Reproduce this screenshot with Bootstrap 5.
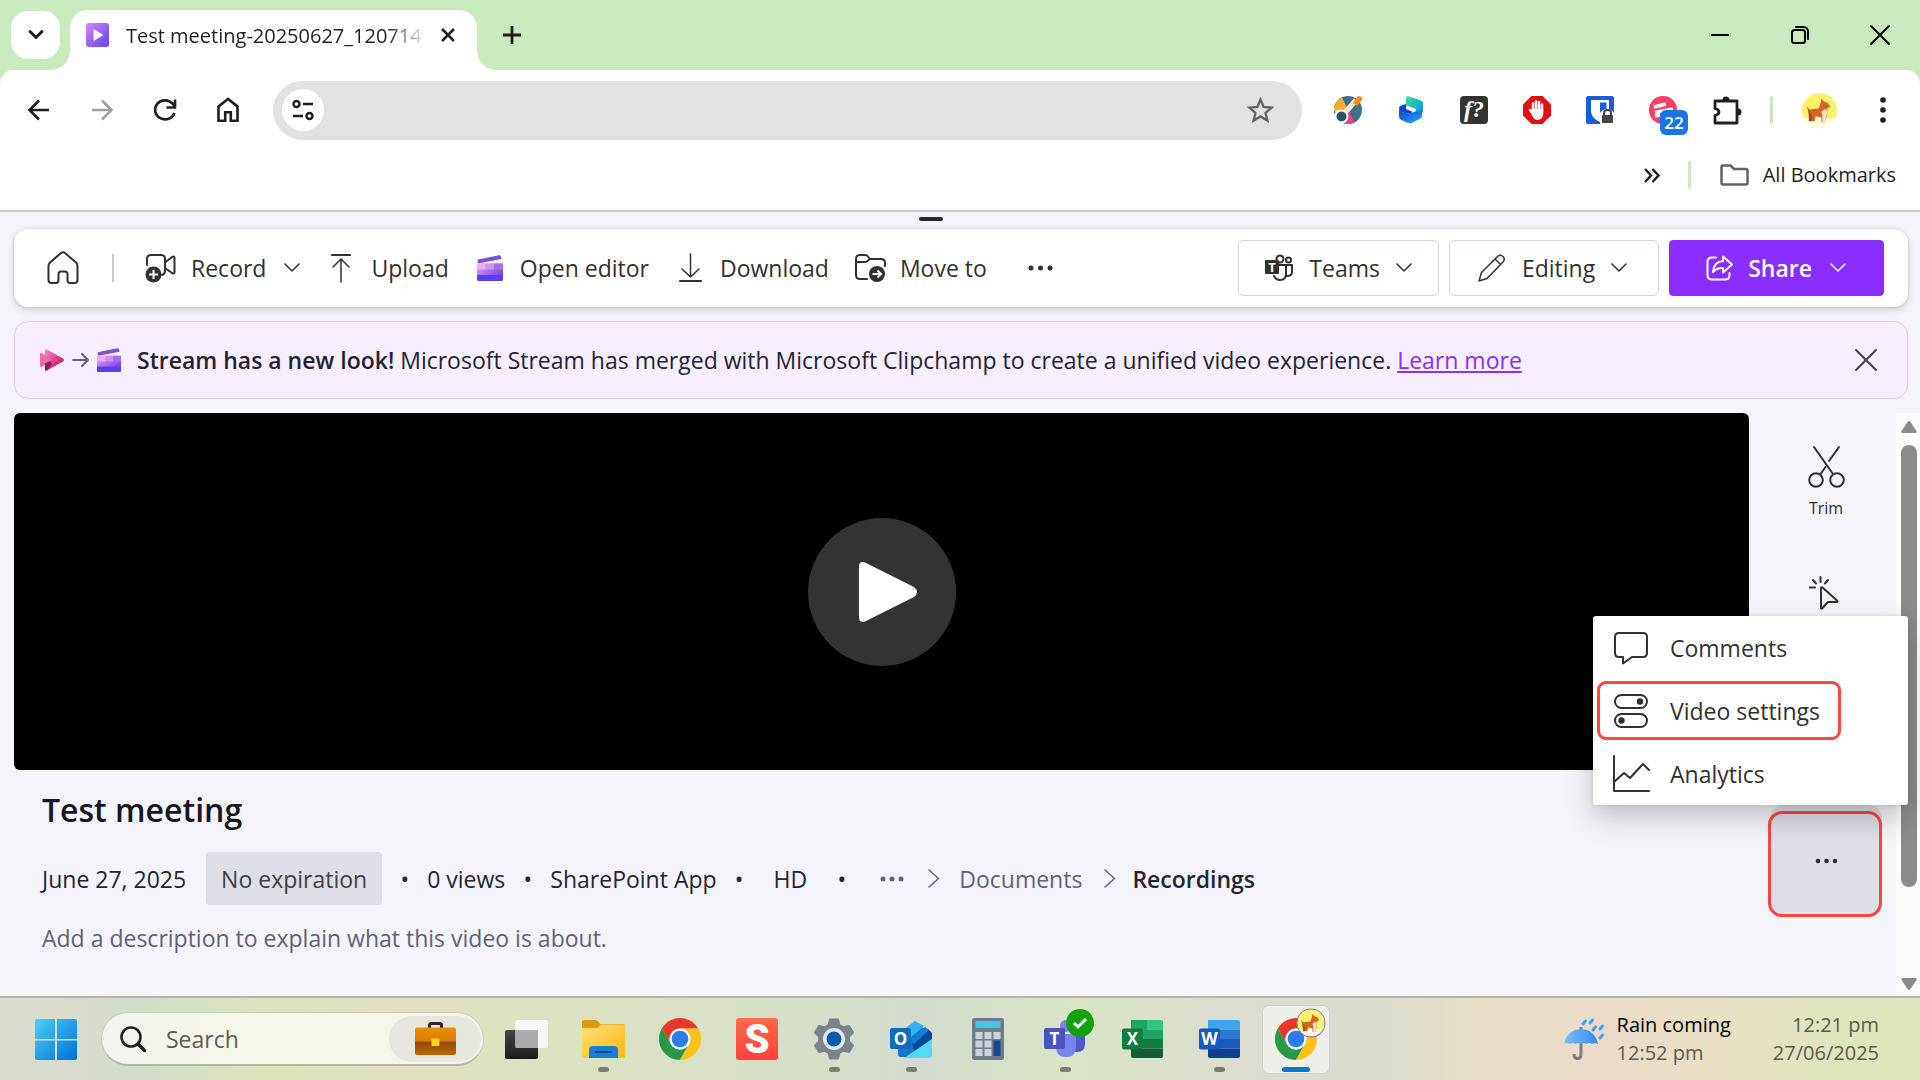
<!DOCTYPE html>
<html lang="en">
<head>
  <meta charset="UTF-8" />
  <meta name="viewport" content="width=device-width, initial-scale=1" />
  <title>Test meeting-20250627_120714</title>
  <link href="https://cdn.jsdelivr.net/npm/bootstrap@5.3.0/dist/css/bootstrap.min.css" rel="stylesheet" />
  <style>
    body { font-family: "Open Sans", "Noto Sans", sans-serif; font-size: 23px; line-height: 32px; color: #323130; background: #f5f4fa; overflow: hidden; }
    svg { display: block; flex-shrink: 0; overflow: visible; }
    button { border: 0; background: none; padding: 0; color: inherit; white-space: nowrap; }
    .ln { fill: none; stroke: currentColor; stroke-width: 2; stroke-linecap: round; stroke-linejoin: round; }
    .thin { stroke-width: 1.5; }
    .thick { stroke-width: 3; }

    /* Tab strip */
    .tab-strip { height: 70px; background: #cbe9bf; color: #1f1f1f; padding: 10px 31px 0 11px; }
    .tab-search { width: 49px; height: 48px; border-radius: 17px; background: #fff; margin: 0 10px 10px 0; }
    .active-tab { width: 407px; height: 60px; background: #fff; border-radius: 18px 18px 0 0; padding: 0 21px 10px 16px; font-size: 20px; position: relative; }
    .active-tab::before, .active-tab::after { content: ""; position: absolute; bottom: 0; width: 18px; height: 18px; }
    .active-tab::before { left: -18px; background: radial-gradient(circle at 0 0, transparent 17px, #fff 18px); }
    .active-tab::after { right: -18px; background: radial-gradient(circle at 100% 0, transparent 17px, #fff 18px); }
    .tab-title { margin: 2px 0 0 17px; white-space: nowrap; -webkit-mask-image: linear-gradient(90deg, #000 88%, rgba(0,0,0,.15)); }
    .new-tab { margin: 0 0 10px 26px; }
    .win-buttons { gap: 62px; color: #000; margin-bottom: 10px; }

    /* Address bar and bookmarks */
    .toolbar-wrap { background: #cbe9bf; }
    .toolbar-box { background: #fff; height: 142px; border-radius: 14px 14px 0 0; border-bottom: 2px solid #ccc; color: #1f1f23; }
    .address-row { height: 80px; padding: 0 34px 0 27px; }
    .nav-icons { gap: 39px; margin-right: 33px; }
    .omnibox { height: 59px; border-radius: 30px; background: #e1e1e1; padding: 0 28px 0 9px; }
    .omnibox input { background: none; border: 0; outline: 0; height: 40px; font-size: 20px; }
    .site-info { width: 42px; height: 42px; border-radius: 50%; background: #fff; }
    .extensions { gap: 35px; margin-left: 32px; }
    .green-rule { width: 3px; height: 28px; border-radius: 2px; background: #cbe9bf; margin: 0 29px 0 28px; }
    .count-tag { position: absolute; left: 11px; top: 14px; width: 28px; height: 25px; border-radius: 6px; background: #1a73e8; color: #fff; font: 600 17px/25px "Open Sans", sans-serif; text-align: center; }
    .browser-menu { padding-left: 43px; }
    .bookmark-row { height: 50px; padding-right: 24px; font-size: 20px; }
    .bookmark-row button { gap: 14px; }

    /* Command bar */
    .handle-row { height: 17px; padding: 5px 58px 0 0; }
    .handle { width: 24px; height: 4px; border-radius: 2px; background: #242433; }
    .command-bar { height: 78px; margin: 0 12px 14px 14px; padding: 0 24px 0 33px; background: #fff; border-radius: 14px; box-shadow: 0 3px 7px rgba(0,0,0,.16), 0 0 3px rgba(0,0,0,.14); }
    .commands { gap: 25px; }
    .cmd { display: flex; align-items: center; gap: 14px; }
    .cmd-rule { width: 2px; height: 28px; background: #c8c8c8; margin: 0 6px 0 8px; }
    .box-btn { height: 56px; display: flex; align-items: center; gap: 16px; border: 1px solid #d1d1e0; border-radius: 6px; padding: 0 26px; }
    .edit-btn { padding: 0 31px 0 28px; }
    .share-btn { background: #8a2dff; border-color: #8a2dff; border-radius: 4px; color: #fff; font-weight: 600; padding: 0 37px 0 36px; gap: 14px; }
    .mode-buttons { gap: 10px; }

    /* Banner */
    .banner { height: 78px; margin: 0 12px 14px 14px; padding: 0 30px 0 25px; background: #f7efff; border: 1px solid #e3c8fb; border-radius: 14px; color: #242433; }
    .banner a { color: #8a2dff; }

    /* Player */
    .player { background: #000; border-radius: 6px; }
    .play-btn { width: 148px; height: 148px; border-radius: 50%; background: #333; color: #fff; }
    .video-col { padding-left: 14px; min-width: 0; }
    .details { padding: 18px 0 42px 28px; color: #242433; }
    .details h1 { font-size: 32px; font-weight: 600; line-height: 44px; margin: 0 0 20px; color: #16161f; }
    .meta-row { height: 53px; margin-bottom: 17px; white-space: nowrap; }
    .expiry { height: 53px; background: #dedee7; border-radius: 4px; padding: 0 15px; margin-left: 20px; color: #424242; }
    .dot { width: 45px; text-align: center; }
    .muted-ink, .details a { color: #616179; text-decoration: none; }
    .details a { margin: 0 14px 0 11px; }

    /* Side tools */
    .tools { padding: 14px 14px 79px 21px; gap: 14px; color: #323130; }
    .tool-btn { width: 112px; height: 112px; border-radius: 14px; display: flex; flex-direction: column; align-items: center; font-size: 16px; line-height: 22px; }
    .tool-btn.more { background: #dedee7; justify-content: center; position: relative; }
    .tool-btn.more::after { content: ""; position: absolute; inset: 6px 0 0 -2px; border: 3px solid #ff4444; border-radius: 14px; }
    .overflow-menu { position: absolute; right: -26px; bottom: 112px; width: 315px; display: flex; flex-direction: column; align-items: flex-start; background: #fff; border-radius: 3px; box-shadow: 0 12px 28px rgba(0,0,0,.22), 0 0 4px rgba(0,0,0,.12); z-index: 5; }
    .overflow-menu button { display: flex; align-items: center; gap: 22px; height: 59px; margin: 2px 4px; padding: 0 18px 0 14px; border: 3px solid transparent; border-radius: 9px; }
    .overflow-menu .picked { border-color: #ff4444; }
    .scroll-track { width: 24px; background: #fcfcfc; padding: 8px 4px 6px 5px; color: #8b8b8b; }
    .scroll-thumb { width: 16px; height: 442px; border-radius: 8px; background: #8b8b8b; margin-top: 12px; }

    /* Taskbar */
    .taskbar { height: 84px; border-top: 2px solid #b3b7a4; padding: 0 41px 0 35px; font-size: 20px; line-height: 28px; color: #5c5c54;
      background: linear-gradient(90deg, #dddbd0 0, #d3dccc 7%, #dce4ba 14%, #e0e0c0 21%, #dce2c3 30%, #d8dfc8 40%, #d3dccf 48%, #dae4c6 56%, #dcdbd2 66%, #d9dccf 71%, #e7dec8 77%, #ebdbca 84%, #e6e1c3 91%, #dee6bb 96%, #dde5ba 100%); }
    .search-pill { width: 383px; height: 54px; border-radius: 27px; margin: 0 9px 0 24px; padding: 0 2px 0 18px; background: linear-gradient(90deg, #f2f4ee, #f7f9ea 50%, #f3f4ea); border: 1px solid #c9cdb8; border-bottom: 2px solid #b3b7a4; }
    .search-pill input { border: 0; background: none; outline: 0; width: 200px; margin-left: 18px; font-size: 23px; color: #5c5c54; min-width: 0; }
    .search-pill input::placeholder { color: #5c5c54; opacity: 1; }
    .case-pill { width: 92px; height: 46px; border-radius: 23px; background: #e5e6dd; }
    .apps { gap: 11px; }
    .app { width: 66px; height: 67px; border-radius: 6px; position: relative; display: flex; align-items: center; justify-content: center; }
    .app.running::after { content: ""; position: absolute; bottom: 1px; left: 28px; width: 11px; height: 5px; border-radius: 3px; background: #7d7f74; }
    .app.current { background: #eeefe9; box-shadow: 0 0 0 1px #cfd0c8; }
    .app.current::after { left: 19px; width: 28px; background: #0078d4; }
    .weather { gap: 13px; margin-right: 42px; }
  </style>
</head>
<body class="vh-100 d-flex flex-column">

  <!-- Shared icons -->
  <svg width="0" height="0" class="position-absolute" aria-hidden="true">
    <defs>
      <linearGradient id="gClap" x1="0" y1="0" x2="1" y2="1"><stop offset="0" stop-color="#e6a6f5"/><stop offset=".5" stop-color="#a568e8"/><stop offset="1" stop-color="#4b2fe8"/></linearGradient>
      <linearGradient id="gFav" x1="0" y1="0" x2="1" y2="1"><stop offset="0" stop-color="#d985f5"/><stop offset="1" stop-color="#5b43f5"/></linearGradient>
      <linearGradient id="gPink" x1="0" y1="0" x2="1" y2="1"><stop offset="0" stop-color="#ff8fc2"/><stop offset=".6" stop-color="#d63384"/><stop offset="1" stop-color="#8f1a5c"/></linearGradient>
      <linearGradient id="gWin" x1="0" y1="0" x2="1" y2="1"><stop offset="0" stop-color="#4cd0ff"/><stop offset="1" stop-color="#006fd0"/></linearGradient>
      <linearGradient id="gFold" x1="0" y1="0" x2="1" y2="1"><stop offset="0" stop-color="#ffdf7a"/><stop offset="1" stop-color="#fdb813"/></linearGradient>
      <linearGradient id="gCase" x1="0" y1="0" x2="0" y2="1"><stop offset="0" stop-color="#ee9005"/><stop offset=".5" stop-color="#d97a00"/><stop offset=".52" stop-color="#8f4a02"/><stop offset="1" stop-color="#bd6a05"/></linearGradient>
      <linearGradient id="gRed" x1="0" y1="0" x2="0" y2="1"><stop offset="0" stop-color="#ff6b47"/><stop offset="1" stop-color="#ff4040"/></linearGradient>
      <linearGradient id="gDark" x1="0" y1="0" x2="0" y2="1"><stop offset="0" stop-color="#444"/><stop offset="1" stop-color="#1c1c1c"/></linearGradient>
      <linearGradient id="gUmb" x1="0" y1="0" x2="1" y2="0"><stop offset="0" stop-color="#7cc0fb"/><stop offset="1" stop-color="#2f8cf0"/></linearGradient>
      <linearGradient id="gTeal" x1="0" y1="0" x2="1" y2="1"><stop offset="0" stop-color="#3ddc97"/><stop offset=".6" stop-color="#12b5c9"/><stop offset="1" stop-color="#0a8fd8"/></linearGradient>
      <linearGradient id="gBlue" x1="0" y1="0" x2="1" y2="1"><stop offset="0" stop-color="#1443c9"/><stop offset=".5" stop-color="#1b72ea"/><stop offset="1" stop-color="#22b2f5"/></linearGradient>
    </defs>
    <symbol id="chev" viewBox="0 0 16 10"><path class="ln thin" d="M1 1l7 7 7-7"/></symbol>
    <symbol id="next" viewBox="0 0 12 19"><path class="ln thin" d="M1 1l9.500 8.500L1 18"/></symbol>
    <symbol id="clap" viewBox="0 0 26 26">
      <path d="M1 4.500L22 .2a1.500 1.500 0 0 1 1.800 1.200L24.500 4 1.200 8.500Q0 6 1 4.500z" fill="#7f4fd4"/>
      <path d="M0 8.500h26V24a2 2 0 0 1-2 2H2a2 2 0 0 1-2-2z" fill="url(#gClap)"/>
      <path d="M0 8.500h8.600v6H0z" fill="#e9adf6"/><path d="M8.600 8.500h8.700v6H8.600z" fill="#cf94f2"/><path d="M17.300 8.500H26v6h-8.700z" fill="#a76df0"/>
      <path d="M0 20h26v4a2 2 0 0 1-2 2H2a2 2 0 0 1-2-2z" fill="#5740ee"/>
    </symbol>
    <symbol id="chrome" viewBox="0 0 48 48">
      <path d="M24 12h20.780A24 24 0 0 0 3.220 12l10.390 18A12 12 0 0 1 24 12z" fill="#e8382c"/>
      <path d="M3.220 12A24 24 0 0 0 24 48l10.390-18a12 12 0 0 1-20.780 0z" fill="#279847"/>
      <path d="M44.780 12A24 24 0 0 1 24 48l10.390-18A12 12 0 0 0 24 12z" fill="#fcc21a"/>
      <circle cx="24" cy="24" r="12" fill="#fff"/><circle cx="24" cy="24" r="9.500" fill="#2c7bea"/>
    </symbol>
    <symbol id="corgi" viewBox="0 0 36 36">
      <circle cx="18" cy="18" r="18" fill="#fffbe0"/>
      <path d="M0 18a18 18 0 0 1 36 0q0 5-2 8H2q-2-4-2-8z" fill="#fcf26a"/>
      <path d="M5 14l3 3 9-1 2-5 1-5 3 3 3 1 3 4-3 2v7l-2 3v4h-4v-5l-6-1-1 5H8l-1-6-1-5z" fill="#d2662c"/>
      <path d="M20 19l5-3 1 5-2 5v4h-3v-6z" fill="#f6e3cc"/><path d="M7 18l4 7-2 4H7z" fill="#a94c1a"/>
    </symbol>
  </svg>

  <!-- Tab strip -->
  <header class="tab-strip d-flex align-items-center">
    <button class="tab-search d-flex align-items-center justify-content-center" aria-label="Search tabs">
      <svg width="16" height="10" viewBox="0 0 16 10"><path class="ln thick" d="M2 1.500l6 6 6-6"/></svg>
    </button>
    <div class="active-tab d-flex align-items-center">
      <svg width="23" height="24" viewBox="0 0 23 24"><rect width="23" height="24" rx="3" fill="url(#gFav)"/><path d="M7.500 7v10q0 1 1 .5l8-5q.6-.5 0-1l-8-5q-1-.4-1 .5z" fill="#fff"/></svg>
      <span class="tab-title">Test meeting-20250627_120714</span>
      <button class="ms-auto" aria-label="Close tab"><svg width="16" height="16" viewBox="0 0 16 16"><path d="M2 2l12 12M14 2L2 14" stroke="#1f1f1f" stroke-width="2.600"/></svg></button>
    </div>
    <button class="new-tab" aria-label="New tab"><svg width="18" height="18" viewBox="0 0 18 18"><path d="M9 0v18M0 9h18" stroke="#1f1f1f" stroke-width="2.800"/></svg></button>
    <div class="win-buttons d-flex align-items-center ms-auto">
      <button aria-label="Minimize"><svg width="18" height="18" viewBox="0 0 18 18"><path d="M0 9h18" stroke="#000" stroke-width="2"/></svg></button>
      <button aria-label="Restore"><svg width="18" height="18" viewBox="0 0 18 18"><rect class="ln" x="1" y="4" width="13" height="13" rx="2.500"/><path class="ln" d="M5 1h7.500A4.500 4.500 0 0 1 17 5.500V13"/></svg></button>
      <button aria-label="Close"><svg width="18" height="18" viewBox="0 0 18 18"><path class="ln" d="M0 0l18 18M18 0L0 18"/></svg></button>
    </div>
  </header>

  <!-- Address bar -->
  <div class="toolbar-wrap">
    <div class="toolbar-box">
      <div class="address-row d-flex align-items-center">
        <nav class="nav-icons d-flex align-items-center">
          <button aria-label="Back"><svg width="24" height="24" viewBox="0 0 24 24"><path d="M22 12H3M12 2.500L2.500 12l9.500 9.500" fill="none" stroke="#1f1f23" stroke-width="2.600"/></svg></button>
          <button aria-label="Forward"><svg width="24" height="24" viewBox="0 0 24 24"><path d="M2 12h19M12 2.500l9.500 9.500-9.500 9.500" fill="none" stroke="#a0a0a0" stroke-width="2.600"/></svg></button>
          <button aria-label="Reload"><svg width="24" height="24" viewBox="0 0 24 24"><path d="M21.500 15A10 9.500 0 1 1 19.500 5.500L22 8.500M22 1.500v8h-8.500" fill="none" stroke="#1f1f23" stroke-width="2.600"/></svg></button>
          <button aria-label="Home"><svg width="24" height="26" viewBox="0 0 24 26"><path d="M2.500 9.500L12 2l9.500 7.500v14.200h-6.700v-8.500H9.200v8.500H2.500z" fill="none" stroke="#1f1f23" stroke-width="2.600"/></svg></button>
        </nav>
        <div class="omnibox d-flex align-items-center flex-grow-1">
          <button class="site-info d-flex align-items-center justify-content-center" aria-label="Site information"><svg width="22" height="20" viewBox="0 0 22 20"><g fill="none" stroke="#1f1f23" stroke-width="2.400"><circle cx="4.500" cy="4" r="3"/><path d="M11 4h10M1 16h10"/><circle cx="17.500" cy="16" r="3"/></g></svg></button>
          <input class="flex-grow-1" type="text" aria-label="Address" />
          <button aria-label="Bookmark this tab"><svg width="27" height="26" viewBox="0 0 27 26"><path d="M13.500 2.500l3.100 7.400 8 .7-6.100 5.200 1.900 7.800-6.900-4.200-6.900 4.200 1.900-7.800-6.100-5.200 8-.7z" fill="none" stroke="#5f6368" stroke-width="2.300"/></svg></button>
        </div>
        <div class="extensions d-flex align-items-center">
          <button aria-label="Color picker"><svg width="28" height="28" viewBox="0 0 28 28"><circle cx="14" cy="14" r="14" fill="#41708a"/><path d="M14 14L0 13A14 14 0 0 1 8 1.500z" fill="#f9ab2e"/><path d="M14 14L0 13Q1 18 5 20z" fill="#fdd63f"/><path d="M14 14l7 12q-6 3.500-12 1z" fill="#f2398a"/><path d="M10 18L22 4" stroke="#fff" stroke-width="5"/><path d="M10 18L22 5" stroke="#ffe2b8" stroke-width="3"/><path d="M19 7l5-7q5 0 4 4l-5 6z" fill="#fb8a1c"/><circle cx="7.500" cy="20.500" r="6" fill="#2d5468" stroke="#fff" stroke-width="2"/></svg></button>
          <button aria-label="Designer"><svg width="28" height="28" viewBox="0 0 28 28"><path d="M9 2.500Q9-.5 12 .5l11 3.500q3 1 3 4v6q0 3-3 4l-4 1V13L9 9.500z" fill="url(#gTeal)"/><path d="M2 12q0-2 2-2.500L9 8v1.500L19 13v2q-1 3-5 4.500L4 16q-2-1-2-4z" fill="#fff"/><path d="M2 12q0-2 2-2.500L9 8v5l7 3q-3 2-8 1.500L3 15z" fill="#1443c9"/><path d="M2 13q1 2.500 4 3.500 7 2 12-1 4 0 7-2.500V20q0 2-2.500 3L16 26.500q-3 1.500-6 0L4.500 24Q2 23 2 20z" fill="url(#gBlue)"/></svg></button>
          <button aria-label="Font finder"><svg width="28" height="28" viewBox="0 0 28 28"><rect width="28" height="28" rx="4" fill="#333"/><text x="14" y="21" text-anchor="middle" font-family="Liberation Serif, serif" font-style="italic" font-weight="700" font-size="24" fill="#fff">f?</text></svg></button>
          <button aria-label="Ad blocker"><svg width="28" height="28" viewBox="0 0 28 28"><path d="M8.500 0h11L28 8.500v11L19.500 28h-11L0 19.500v-11z" fill="#e60f0f"/><g stroke="#fff" stroke-width="2.500" stroke-linecap="round" fill="none"><path d="M10 15V7.500M13 14V5.500M16 14V6M19 15V8.500M10 18l-3-4"/></g><path d="M8.800 13h11.500v4q0 7-6 7-3.500 0-5.500-5z" fill="#fff"/></svg></button>
          <button aria-label="Password manager"><svg width="28" height="28" viewBox="0 0 28 28"><rect width="28" height="28" rx="2" fill="#175ddc"/><path d="M5 4h18v11q0 7-9 11-9-4-9-11z" fill="#fff"/><path d="M14 6.500h6.500V15q0 4-6.500 8z" fill="#175ddc"/><path d="M14 28V17q3-4 7-4t7 4v11z" fill="#fff"/><rect x="16" y="19" width="11" height="8" rx="1" fill="#444"/><path d="M18 19v-2q0-3 3.500-3t3.500 3v2" fill="none" stroke="#444" stroke-width="2"/></svg></button>
          <button class="position-relative" aria-label="Notes, 22 items"><svg width="28" height="28" viewBox="0 0 28 28"><circle cx="14" cy="14" r="14" fill="#ff3d60"/><path d="M5 11l12-3M6 16.500L24 13M6 20l5-1" stroke="#fff" stroke-width="3.600"/></svg><span class="count-tag">22</span></button>
          <button aria-label="Extensions"><svg width="30" height="30" viewBox="0 0 30 30"><path d="M3 6h22v22H3v-7.500q4-1 4-3.500t-4-3.500z" fill="none" stroke="#1f1f23" stroke-width="2.800" stroke-linejoin="round"/><path d="M10.500 5a3.500 3.500 0 0 1 7 0zM26 13.500a3.500 3.500 0 0 1 0 7z" fill="#1f1f23"/></svg></button>
        </div>
        <span class="green-rule"></span>
        <button aria-label="Profile"><svg width="35" height="35"><use href="#corgi"/></svg></button>
        <button class="browser-menu" aria-label="Menu"><svg width="6" height="26" viewBox="0 0 6 26"><g fill="#1f1f23"><circle cx="3" cy="3" r="2.800"/><circle cx="3" cy="13" r="2.800"/><circle cx="3" cy="23" r="2.800"/></g></svg></button>
      </div>
      <div class="bookmark-row d-flex align-items-center justify-content-end">
        <button aria-label="More bookmarks"><svg width="16" height="15" viewBox="0 0 16 15"><path d="M1 1l6 6.500L1 14M8.500 1l6 6.500-6 6.500" fill="none" stroke="#1f1f23" stroke-width="2.400"/></svg></button>
        <span class="green-rule"></span>
        <button class="d-flex align-items-center"><svg width="29" height="22" viewBox="0 0 29 22"><path d="M1.500 19V3q0-1.500 1.500-1.500h7.500L14 5h12q1.500 0 1.500 1.500V19q0 1.500-1.500 1.500H3Q1.500 20.500 1.500 19z" fill="none" stroke="#5f6368" stroke-width="2.500"/></svg>All Bookmarks</button>
      </div>
    </div>
  </div>

  <main class="d-flex flex-column flex-grow-1">
    <div class="handle-row d-flex justify-content-center"><span class="handle"></span></div>

    <!-- Command bar -->
    <div class="command-bar d-flex align-items-center">
      <div class="commands d-flex align-items-center">
        <button aria-label="Home"><svg width="32" height="34" viewBox="0 0 32 34"><path class="ln" d="M1.500 15q0-2 1.500-3.500L14 2q2-1.500 4 0l11 9.500q1.500 1.500 1.500 3.500v14q0 3-3 3H23q-2.500 0-2.500-3v-6q0-2.500-2.500-2.500h-4q-2.500 0-2.500 2.500v6q0 3-2.500 3H4.500q-3 0-3-3z"/></svg></button>
        <span class="cmd-rule"></span>
        <button class="cmd">
          <svg width="32" height="30" viewBox="0 0 32 30"><path class="ln" d="M2 12V6q0-4 4-4h10q4 0 4 4v12q0 3-3 4M20 9.500l7-5.500q2.500-1.200 2.500 1v14q0 2.200-2.500 1l-7-5"/><circle cx="8.500" cy="21.500" r="8" fill="#323130"/><path d="M8.500 17v9M4 21.500h9" stroke="#fff" stroke-width="2"/></svg>
          Record <svg class="ms-1" width="16" height="10"><use href="#chev"/></svg>
        </button>
        <button class="cmd"><svg width="32" height="30" viewBox="0 0 32 30"><path class="ln" d="M7 2h18"/><path class="ln thin" d="M16 29V6M8 14l8-8 8 8"/></svg>Upload</button>
        <button class="cmd"><svg width="32" height="26"><use href="#clap"/></svg>Open editor</button>
        <button class="cmd"><svg width="32" height="30" viewBox="0 0 32 30"><path class="ln" d="M6 28h21"/><path class="ln thin" d="M16.500 1v23M8 16l8.500 8 8.500-8"/></svg>Download</button>
        <button class="cmd"><svg width="32" height="28" viewBox="0 0 32 28"><path class="ln" d="M13 25H6q-4 0-4-4V5q0-4 4-4h5q2 0 3 1.500L16 5h11q4 0 4 4v3M2 8h9q2 0 3-1.500L15.500 5"/><circle cx="23" cy="20" r="8" fill="#323130"/><path d="M18.500 20h8M23.500 16.500L27 20l-3.500 3.500" fill="none" stroke="#fff" stroke-width="2"/></svg>Move to</button>
        <button class="ps-3" aria-label="More commands"><svg width="25" height="6" viewBox="0 0 25 6"><g fill="#323130"><circle cx="3" cy="3" r="2.500"/><circle cx="12.500" cy="3" r="2.500"/><circle cx="22" cy="3" r="2.500"/></g></svg></button>
      </div>
      <div class="mode-buttons d-flex ms-auto">
        <button class="box-btn">
          <svg width="28" height="28" viewBox="0 0 28 28"><g class="ln"><circle cx="15" cy="5" r="3.500"/><circle cx="23.500" cy="6" r="2.500"/><path d="M14 11h7v9q0 6-6 6-4 0-6-4M21 11h6v7q0 4-5 4"/></g><rect x="0" y="6" width="14" height="14" rx="1" fill="#323130"/><text x="7" y="17.500" text-anchor="middle" font-size="13" font-weight="700" fill="#fff">T</text></svg>
          Teams <svg width="16" height="10"><use href="#chev"/></svg>
        </button>
        <button class="box-btn edit-btn">
          <svg width="28" height="28" viewBox="0 0 28 28"><path class="ln thin" d="M1 27l2.500-8.500L19.500 2.500q3-2.500 5.500 0t0 5.500L9 24.500zM17 5l5.500 5.500"/></svg>
          Editing <svg width="16" height="10"><use href="#chev"/></svg>
        </button>
        <button class="box-btn share-btn">
          <svg width="28" height="26" viewBox="0 0 28 26"><path class="ln" d="M10 2.500H6q-4.500 0-4.500 4.500v13Q1.500 24.500 6 24.500h13q4.500 0 4.500-4.500v-2M17 1.500l9 8-9 8v-4.500q-6-.5-10 4Q8 6.500 17 6z"/></svg>
          Share <svg class="ms-1" width="16" height="10"><use href="#chev"/></svg>
        </button>
      </div>
    </div>

    <!-- Banner -->
    <div class="banner d-flex align-items-center">
      <svg width="25" height="22" viewBox="0 0 25 22"><path d="M5 1.500Q5-.5 7 .5l16 9q2 1.500 0 3l-16 9q-2 1-2-1z" fill="url(#gPink)"/><path d="M0 5q0-1.500 1.500-1L10 9.500q2 1.500 0 3L1.500 18Q0 18.500 0 17z" fill="#ee6aa7"/><path d="M5 14.500l5-2.500 2 3-5 6.500q-2 1-2-1z" fill="#8f1a5c"/></svg>
      <svg class="ms-2" width="16" height="16" viewBox="0 0 16 16" color="#616179"><path class="ln" d="M0 8h15M9 2l6 6-6 6"/></svg>
      <svg class="ms-2" width="24" height="24"><use href="#clap"/></svg>
      <span class="ms-3"><strong class="fw-semibold">Stream has a new look!</strong> Microsoft Stream has merged with Microsoft Clipchamp to create a unified video experience. <a href="#">Learn more</a></span>
      <button class="ms-auto" aria-label="Dismiss"><svg width="22" height="22" viewBox="0 0 22 22" color="#424250"><path class="ln" d="M1 1l20 20M21 1L1 21"/></svg></button>
    </div>

    <!-- Video and side tools -->
    <div class="d-flex flex-grow-1">
      <section class="video-col d-flex flex-column flex-grow-1">
        <div class="player flex-grow-1 d-flex align-items-center justify-content-center">
          <button class="play-btn d-flex align-items-center justify-content-center" aria-label="Play"><svg class="ms-2 ps-1" width="64" height="62" viewBox="0 0 60 62"><path d="M1 6Q1-1 8 2l48 24q6 5 0 10L8 60q-7 3-7-4z" fill="#fff"/></svg></button>
        </div>
        <div class="details">
          <h1>Test meeting</h1>
          <div class="meta-row d-flex align-items-center">
            <span>June 27, 2025</span>
            <button class="expiry">No expiration</button>
            <span class="dot">•</span><span>0 views</span>
            <span class="dot">•</span><span>SharePoint App</span>
            <span class="dot">•</span><span class="px-2 mx-1">HD</span>
            <span class="dot">•</span>
            <button class="mx-3" aria-label="Show path"><svg width="24" height="6" viewBox="0 0 24 6"><g fill="#616179"><circle cx="3" cy="3" r="2.500"/><circle cx="12" cy="3" r="2.500"/><circle cx="21" cy="3" r="2.500"/></g></svg></button>
            <svg class="mx-2" width="12" height="19" color="#616179"><use href="#next"/></svg>
            <a href="#">Documents</a>
            <svg class="mx-2" width="12" height="19" color="#616179"><use href="#next"/></svg>
            <strong class="fw-semibold ms-2">Recordings</strong>
          </div>
          <div class="muted-ink">Add a description to explain what this video is about.</div>
        </div>
      </section>

      <aside class="tools d-flex flex-column">
        <button class="tool-btn pt-3">
          <svg class="mb-2 mt-1" width="37" height="42" viewBox="0 0 37 42"><g class="ln"><circle cx="8" cy="33" r="6.800"/><circle cx="29" cy="33" r="6.800"/><path d="M6 0l19 27M31 0L21 14M12.500 27l5-7"/></g></svg>
          Trim
        </button>
        <button class="tool-btn pt-3" aria-label="Interactivity"><svg class="mt-2 me-1" width="30" height="34" viewBox="0 0 30 34"><path class="ln" d="M12 11.500v19q0 2 1.500.5L19 25h8.500q2 0 .5-1.500L13.500 10.500Q12 9.500 12 11.500zM11.500 0v5M4 3l3 3.500M19 3l-3 3.500M1 10.500h5"/></svg></button>
        <div class="position-relative mt-auto">
          <button class="tool-btn more" aria-label="More"><svg width="23" height="6" viewBox="0 0 23 6"><g fill="#323130"><circle cx="3" cy="3" r="2.300"/><circle cx="11.500" cy="3" r="2.300"/><circle cx="20" cy="3" r="2.300"/></g></svg></button>
          <div class="overflow-menu">
            <button><svg width="34" height="32" viewBox="0 0 34 32"><path class="ln" d="M5 1h24q4 0 4 4v16q0 4-4 4H18l-9 6.500V25H5q-4 0-4-4V5q0-4 4-4z"/></svg>Comments</button>
            <button class="picked"><svg width="34" height="34" viewBox="0 0 34 34"><g class="ln"><rect x="1" y="1" width="32" height="13" rx="6.500"/><rect x="1" y="20" width="32" height="13" rx="6.500"/></g><circle cx="26" cy="7.500" r="3.200" fill="#323130"/><circle cx="7.500" cy="26.500" r="3.200" fill="#323130"/></svg>Video settings</button>
            <button><svg width="34" height="36" viewBox="0 0 34 36"><path class="ln" d="M0 0v35h35M0 26l10-9 6 5L29 8l6 6"/></svg>Analytics</button>
          </div>
        </div>
      </aside>

      <div class="scroll-track d-flex flex-column" aria-hidden="true">
        <svg width="16" height="12" viewBox="0 0 16 12"><path d="M6.500 1q1.500-2 3 0l6 9q.8 2-1 2h-13q-1.800 0-1-2z" fill="currentColor"/></svg>
        <span class="scroll-thumb"></span>
        <svg class="mt-auto" width="16" height="12" viewBox="0 0 16 12"><path d="M6.500 11q1.500 2 3 0l6-9q.8-2-1-2h-13Q-.3 0 .5 2z" fill="currentColor"/></svg>
      </div>
    </div>
  </main>

  <!-- Taskbar -->
  <footer class="taskbar d-flex align-items-center">
    <button aria-label="Start"><svg width="42" height="41" viewBox="0 0 42 41"><path d="M2 0h18v20H0V2q0-2 2-2zM22 0h18q2 0 2 2v18H22zM0 21.500h20V41H2q-2 0-2-2zM22 21.500h20V39q0 2-2 2H22z" fill="url(#gWin)"/></svg></button>
    <div class="search-pill d-flex align-items-center">
      <svg width="26" height="26" viewBox="0 0 26 26"><circle cx="11" cy="11" r="9.500" fill="none" stroke="#222" stroke-width="2.600"/><path d="M18 18l6.500 6.500" stroke="#222" stroke-width="3.400" stroke-linecap="round"/></svg>
      <input type="text" placeholder="Search" aria-label="Search" />
      <span class="case-pill ms-auto d-flex align-items-center justify-content-center"><svg width="41" height="33" viewBox="0 0 41 33"><path d="M14.500 6V3.500q0-2 2-2h8q2 0 2 2V6" fill="none" stroke="#2a2a2a" stroke-width="3"/><rect y="5.500" width="41" height="27.500" rx="2" fill="url(#gCase)"/><rect x="16.500" y="16.500" width="8" height="7.500" rx="1" fill="#f8d21c"/></svg></span>
    </div>
    <div class="apps d-flex align-items-center">
      <button class="app" aria-label="Task view"><svg width="43" height="39" viewBox="0 0 43 39"><rect x="0" y="10" width="33" height="29" rx="2" fill="url(#gDark)"/><rect x="10.500" y="0" width="32.500" height="28" rx="2" fill="#f7f7f7"/><path d="M10.500 10H33v18H10.500z" fill="#ababab"/></svg></button>
      <button class="app running" aria-label="File Explorer"><svg width="43" height="38" viewBox="0 0 43 38"><path d="M0 2q0-2 2-2h11q2 0 3 1.500L18.500 4H41q2 0 2 2v10H0z" fill="#dd9a0c"/><path d="M0 8h16l3-3.500h24V36q0 2-2 2H2q-2 0-2-2z" fill="url(#gFold)"/><path d="M7 38v-8q0-4 4-4h21q4 0 4 4v8z" fill="#1380d4"/><path d="M13 32h17" stroke="#0c4c94" stroke-width="2"/></svg></button>
      <button class="app" aria-label="Chrome"><svg width="42" height="42"><use href="#chrome"/></svg></button>
      <button class="app" aria-label="Snagit"><svg width="42" height="42" viewBox="0 0 42 42"><rect width="42" height="42" rx="3" fill="url(#gRed)"/><text x="21" y="35" text-anchor="middle" font-family="Roboto, sans-serif" font-weight="900" font-size="40" fill="#fff">S</text></svg></button>
      <button class="app running" aria-label="Settings"><svg width="42" height="42" viewBox="0 0 42 42"><path d="M17 1.500h8l1.500 5.500 4 2.300L36 8l4 6.500-4 4v5l4 4L36 34l-5.500-1.300-4 2.300-1.500 5.500h-8L15.500 35l-4-2.300L6 34l-4-6.500 4-4v-5l-4-4L6 8l5.500 1.300 4-2.300z" fill="#7b838d" stroke="#7b838d" stroke-width="2" stroke-linejoin="round"/><circle cx="21" cy="21" r="11" fill="#e4e9ee"/><circle cx="21" cy="21" r="7.500" fill="#0a5cab"/></svg></button>
      <button class="app running" aria-label="Outlook"><svg width="43" height="38" viewBox="0 0 43 38"><path d="M8 14L25 2l17 12v20q0 3-3 3H11q-3 0-3-3z" fill="#1277cf"/><path d="M10 12L25 1l9 5-16 14z" fill="#35b1f0"/><path d="M22 24L38 9l4 4v6L25 33z" fill="#0c479d"/><path d="M20 20l15-13 4 3-15 14z" fill="#1380dc"/><path d="M14 38l28-19v15q0 4-4 4z" fill="#55d8f7"/><rect y="8" width="21" height="21" rx="2" fill="#0f6cbd"/><text x="10.500" y="24.500" text-anchor="middle" font-size="17" font-weight="700" fill="#fff">O</text></svg></button>
      <button class="app" aria-label="Calculator"><svg width="32" height="42" viewBox="0 0 32 42"><rect width="32" height="42" rx="2" fill="#727b87"/><rect x="3.500" y="3" width="25" height="7" rx="1" fill="#3ec8f0"/><g fill="#c9d1db"><path d="M3.500 14h7v7h-7zM12.500 14h7v7h-7zM21.500 14h7v7h-7zM3.500 22.500h7v7h-7zM12.500 22.500h7v7h-7zM3.500 31h7v7h-7zM12.500 31h7v7h-7z"/></g><path d="M21.500 22.500h7V38h-7z" fill="#154a8c"/></svg></button>
      <button class="app running" aria-label="Teams"><svg width="42" height="38" viewBox="0 0 42 38"><circle cx="22" cy="6" r="6" fill="#7b83eb"/><path d="M28 14h13v10q0 8-8 8h-5z" fill="#5059c9"/><path d="M12 14h20v13q0 10-10 10T12 27z" fill="#7b83eb"/><rect y="8" width="21" height="21" rx="2" fill="#4b53bc"/><text x="10.500" y="24.500" text-anchor="middle" font-size="17" font-weight="700" fill="#fff">T</text><circle cx="36" cy="3" r="14" fill="#13a10e"/><path d="M30 3l4 4 8-8" fill="none" stroke="#fff" stroke-width="3"/></svg></button>
      <button class="app" aria-label="Excel"><svg width="41" height="38" viewBox="0 0 41 38"><path d="M9 0h16v9.500H9zM9 9.500h16V19H9z" fill="#21a366"/><path d="M25 0h14q2 0 2 2v7.500H25z" fill="#33c481"/><path d="M25 9.500h16V19H25z" fill="#21a366"/><path d="M9 19h32v9.500H9z" fill="#107c41"/><path d="M9 28.500h32V36q0 2-2 2H11q-2 0-2-2z" fill="#185c37"/><rect y="8.500" width="21" height="21" rx="2" fill="#107c41"/><text x="10.500" y="25" text-anchor="middle" font-size="17" font-weight="700" fill="#fff">X</text></svg></button>
      <button class="app running" aria-label="Word"><svg width="41" height="38" viewBox="0 0 41 38"><path d="M9 0h30q2 0 2 2v7.500H9z" fill="#41a5ee"/><path d="M9 9.500h32V19H9z" fill="#2b7cd3"/><path d="M9 19h32v9.500H9z" fill="#185abd"/><path d="M9 28.500h32V36q0 2-2 2H11q-2 0-2-2z" fill="#103f91"/><rect y="8.500" width="21" height="21" rx="2" fill="#185abd"/><text x="10.500" y="25" text-anchor="middle" font-size="17" font-weight="700" fill="#fff">W</text></svg></button>
      <button class="app running current" aria-label="Chrome, Test meeting"><svg width="42" height="42" viewBox="0 0 42 42"><use href="#chrome" width="42" height="42"/><circle cx="36" cy="5" r="14.500" fill="#8a6fb0"/><use href="#corgi" x="22.500" y="-8.500" width="27" height="27"/></svg></button>
    </div>
    <button class="weather d-flex align-items-center text-start ms-auto">
      <svg width="40" height="41" viewBox="0 0 40 41"><path d="M17 8v27q0 4.500-3.500 4.500T10 35" fill="none" stroke="#807d7d" stroke-width="3"/><path d="M0 25Q3 11 17 10q14 1 17 15-3-2-6 0-3-2-5.500 0-3-2-5.500 0-3-2-5.500 0-3-2-6 0-3-2-6 0z" fill="url(#gUmb)"/><path d="M19 5l2.500-3M26 4l2.500-3M29 11l2.500-3M36 10l2.500-3M36 19l2.500-3" stroke="#45a0f5" stroke-width="3" stroke-linecap="round"/></svg>
      <span><span class="d-block text-black">Rain coming</span><span class="d-block">12:52 pm</span></span>
    </button>
    <button class="text-end">12:21 pm<br />27/06/2025</button>
  </footer>

  <script src="https://cdn.jsdelivr.net/npm/bootstrap@5.3.0/dist/js/bootstrap.bundle.min.js"></script>
</body>
</html>
